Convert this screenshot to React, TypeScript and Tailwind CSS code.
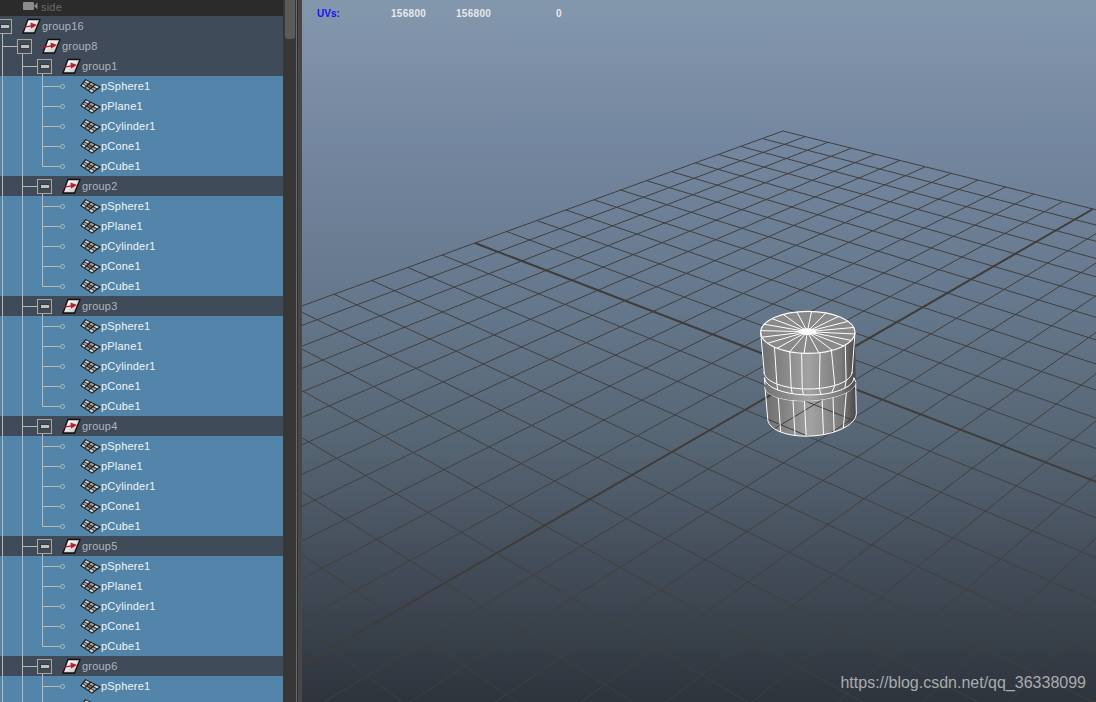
import React from "react";

type P = [number, number];

// Floor grid: homography from (s,t) in [0,2]^2 fitted to four visible grid points
const B: P = [783, 131], M1: P = [475, 243], C: P = [810.5, 372], M2: P = [1093, 209];
const dx1: P = [M1[0] - C[0], M1[1] - C[1]];
const dx2: P = [M2[0] - C[0], M2[1] - C[1]];
const sum: P = [B[0] - M1[0] + C[0] - M2[0], B[1] - M1[1] + C[1] - M2[1]];
const det = dx1[0] * dx2[1] - dx1[1] * dx2[0];
const g = (sum[0] * dx2[1] - sum[1] * dx2[0]) / det;
const h = (dx1[0] * sum[1] - dx1[1] * sum[0]) / det;
const H = (s: number, t: number): P => {
  const w = g * s + h * t + 1;
  const a = M1[0] - B[0] + g * M1[0], b = M2[0] - B[0] + h * M2[0];
  const d = M1[1] - B[1] + g * M1[1], e = M2[1] - B[1] + h * M2[1];
  return [(a * s + b * t + B[0]) / w, (d * s + e * t + B[1]) / w];
};

function Grid() {
  const lines: React.ReactElement[] = [];
  for (let i = 0; i <= 24; i++) {
    const q = i / 12;
    const thick = i === 12;
    const a1 = H(q, 0), a2 = H(q, 2), b1 = H(0, q), b2 = H(2, q);
    for (const [k, p1, p2] of [["a", a1, a2], ["b", b1, b2]] as [string, P, P][]) {
      lines.push(
        <line key={k + i} x1={p1[0]} y1={p1[1]} x2={p2[0]} y2={p2[1]} stroke={thick ? "#403c3a" : "#423f3e"} strokeWidth={thick ? 2 : 1} />
      );
    }
  }
  return <g>{lines}</g>;
}

// Cylinder coordinates are given in a 3x crop anchored at (730,290)
const z = (x: number, y: number): string => `${730 + x / 3},${290 + y / 3}`;
const poly = (pts: number[][]) => pts.map((p) => z(p[0], p[1])).join(" ");

// front half of an ellipse, sampled left to right
const arc = (cx: number, cy: number, rx: number, ry: number, tilt = 0): number[][] => {
  const out: number[][] = [];
  for (let i = 0; i <= 24; i++) {
    const a = Math.PI - (i / 24) * Math.PI;
    const x = cx + rx * Math.cos(a);
    out.push([x, cy + ry * Math.sin(a) + tilt * Math.cos(a)]);
  }
  return out;
};
const onArc = (pts: number[][], x: number): number[] => {
  let best = pts[0];
  for (const p of pts) if (Math.abs(p[0] - x) < Math.abs(best[0] - x)) best = p;
  return best;
};

const topFront = arc(233.5, 127, 141.5, 63);
const band1 = arc(234, 246, 132, 51);
const band2 = arc(238, 263, 134, 52);
const band3 = arc(241, 284, 136, 48, -7);
const bottom = arc(246, 378, 133, 60, -8);

function Wire({ pts, w = 1 }: { pts: number[][]; w?: number }) {
  return <polyline points={poly(pts)} fill="none" stroke="#ffffff" strokeWidth={w} strokeLinejoin="round" />;
}

function CylinderLower() {
  return <polygon points={poly([...band3, ...[...bottom].reverse()])} fill="url(#cyl)" />;
}

function CylinderLowerWire() {
  const xs: [number, number][] = [[145, 150], [183, 188], [225, 228], [272, 272], [312, 312], [350, 345]];
  return (
    <g>
      <Wire pts={band3} />
      <Wire pts={bottom} />
      <Wire pts={[band3[0], bottom[0]]} />
      <Wire pts={[band3[24], bottom[24]]} />
      {xs.map(([a, b]) => (
        <Wire key={a} pts={[onArc(band3, a), onArc(bottom, b)]} />
      ))}
    </g>
  );
}

function CylinderUpper() {
  const spokes: React.ReactElement[] = [];
  const cx = 232, cy = 125, rx = 141.5, ry = 63;
  for (let i = 0; i < 20; i++) {
    const a = (i / 20) * Math.PI * 2 + 0.08;
    spokes.push(<Wire key={i} pts={[[cx, cy], [233.5 + rx * Math.cos(a), 127 + ry * Math.sin(a)]]} />);
  }
  const xs: [number, number][] = [[133, 140], [172, 178], [218, 222], [265, 265], [310, 310], [350, 345]];
  return (
    <g>
      <polygon points={poly([[92, 127], ...[band3[0]], ...band3, [375, 127]])} fill="url(#cyl)" />
      <ellipse cx={730 + 233.5 / 3} cy={290 + 127 / 3} rx={rx / 3} ry={ry / 3} fill="#8a8a8a" stroke="#ffffff" strokeWidth={1.1} />
      {spokes}
      <ellipse cx={730 + cx / 3} cy={290 + cy / 3} rx={9} ry={3.4} fill="#ffffff" />
      <Wire pts={[[92, 127], [103, 250]]} />
      <Wire pts={[[375, 127], [366, 250]]} />
      <Wire pts={[[103, 263], [105, 284]]} />
      <Wire pts={[[372, 263], [377, 276]]} />
      {xs.map(([a, b]) => (
        <Wire key={a} pts={[onArc(topFront, a), onArc(band1, b)]} />
      ))}
      {xs.map(([a, b]) => (
        <Wire key={`s${a}`} pts={[onArc(band1, b), onArc(band2, b + 1)]} />
      ))}
      <Wire pts={band1} />
      <Wire pts={band2} />
    </g>
  );
}

function Viewport() {
  return (
    <svg className="absolute inset-0 h-full w-full" viewBox="302 0 794 702">
      <defs>
        <linearGradient id="cyl" x1="0" y1="0" x2="1" y2="0">
          <stop offset="0" stopColor="#6e6e6e" />
          <stop offset="0.5" stopColor="#a2a2a2" />
          <stop offset="0.85" stopColor="#7a7a7a" />
          <stop offset="1" stopColor="#474747" />
        </linearGradient>
      </defs>
      <CylinderLower />
      <Grid />
      <CylinderLowerWire />
      <CylinderUpper />
    </svg>
  );
}

const LINE = "#b7b9b2";

function Box({ x }: { x: number }) {
  return (
    <g shapeRendering="crispEdges">
      <rect x={x + 0.5} y={3.5} width={14} height={14} fill="#3f4a55" stroke="#a8a89f" />
      <rect x={x + 3} y={8} width={9} height={5} fill="#343a40" />
      <rect x={x + 3.5} y={9} width={8} height={2.5} fill="#bfbfbf" />
    </g>
  );
}

function Guides({ xs }: { xs: number[] }) {
  return (
    <g shapeRendering="crispEdges">
      {xs.map((x) => (
        <rect key={x} x={x} y={0} width={1} height={20} fill={LINE} />
      ))}
    </g>
  );
}

function GroupConnector({ depth }: { depth: number }) {
  // depth 0: group16, depth 1: group8, depth 2: groupN
  const boxX = depth * 20 - 3;
  const width = 22 + depth * 20;
  const parents = [2, 22].slice(0, depth);
  return (
    <svg width={width} height={20} className="shrink-0">
      <Guides xs={parents} />
      {depth > 0 && <rect x={(depth - 1) * 20 + 2} y={10} width={16} height={1} fill={LINE} shapeRendering="crispEdges" />}
      <rect x={depth * 20 + 2} y={17} width={1} height={3} fill={LINE} shapeRendering="crispEdges" />
      <Box x={boxX} />
    </svg>
  );
}

function ChildConnector({ last }: { last: boolean }) {
  return (
    <svg width={80} height={20} className="shrink-0">
      <Guides xs={[2, 22]} />
      <rect x={42} y={0} width={1} height={last ? 11 : 20} fill={LINE} shapeRendering="crispEdges" />
      <rect x={42} y={10} width={18} height={1} fill={LINE} shapeRendering="crispEdges" />
      <circle cx={62.5} cy={10.5} r={2} fill="none" stroke={LINE} />
    </svg>
  );
}

function GroupIcon() {
  return (
    <svg width={20} height={20} viewBox="0 0 20 20" className="shrink-0" style={{ overflow: "visible" }}>
      <defs>
        <linearGradient id="gi" x1="0" y1="0" x2="1" y2="1">
          <stop offset="0.2" stopColor="#ffffff" />
          <stop offset="1" stopColor="#b4b4b4" />
        </linearGradient>
      </defs>
      <polygon points="6,3.5 18,3.5 12.5,17 1,17" fill="url(#gi)" stroke="#0e0e0e" strokeWidth={1.3} />
      <line x1={0} y1={11.3} x2={10} y2={9.8} stroke="#a51f2a" strokeWidth={1.3} />
      <polygon points="8.5,6.6 15,9 9,12.6" fill="#b71d2a" />
    </svg>
  );
}

function MeshIcon() {
  const A: P = [5.5, 0.7], Bb: P = [20, 8], Cc: P = [12, 14], D: P = [1, 6.5];
  const at = (u: number, v: number): P => [
    (1 - u) * (1 - v) * A[0] + u * (1 - v) * Bb[0] + u * v * Cc[0] + (1 - u) * v * D[0],
    (1 - u) * (1 - v) * A[1] + u * (1 - v) * Bb[1] + u * v * Cc[1] + (1 - u) * v * D[1],
  ];
  const cells: React.ReactElement[] = [];
  for (let i = 0; i < 3; i++) {
    for (let j = 0; j < 3; j++) {
      const m = 0.045;
      const pts = [at(i / 3 + m, j / 3 + m), at((i + 1) / 3 - m, j / 3 + m), at((i + 1) / 3 - m, (j + 1) / 3 - m), at(i / 3 + m, (j + 1) / 3 - m)];
      const fill = i === 1 && j === 1 ? "#6e6e6e" : (i + j) % 2 === 0 ? "#d4d4d4" : "#a4a4a4";
      cells.push(<polygon key={`${i}${j}`} points={pts.map((p) => p.join(",")).join(" ")} fill={fill} />);
    }
  }
  return (
    <svg width={21} height={15} viewBox="0 0 21 15" className="shrink-0">
      <polygon points={`${A.join(",")} ${Bb.join(",")} ${Cc.join(",")} ${D.join(",")}`} fill="#1c1c1c" stroke="#1c1c1c" strokeWidth={1.2} />
      {cells}
    </svg>
  );
}

function GroupRow({ name, depth }: { name: string; depth: number }) {
  return (
    <div className="flex h-5 items-center bg-[#3f4b59]">
      <GroupConnector depth={depth} />
      <GroupIcon />
      <span className="text-[11px] leading-5 tracking-[0.2px] text-[#aeb4ba]">{name}</span>
    </div>
  );
}

function MeshRow({ name, last }: { name?: string; last: boolean }) {
  return (
    <div className="flex h-5 items-center bg-[#5285a9]">
      <ChildConnector last={last} />
      <MeshIcon />
      {name && <span className="text-[11px] leading-5 tracking-[0.2px] text-[#f0f4f7]">{name}</span>}
    </div>
  );
}

const meshes = ["pSphere1", "pPlane1", "pCylinder1", "pCone1", "pCube1"];

function Outliner() {
  return (
    <div className="h-full w-[283px] shrink-0 overflow-hidden font-['Liberation_Sans',sans-serif]">
      <div className="flex h-4 items-center bg-[#2b2b2b] pl-[22px]">
        <svg width={19} height={16} viewBox="0 0 19 16" className="shrink-0 -translate-y-px">
          <rect x={1} y={3} width={11} height={8} rx={1} fill="#8c8c8c" />
          <polygon points="12,7 15.5,3.5 15.5,10.5" fill="#8c8c8c" />
        </svg>
        <span className="-translate-y-px text-[11px] tracking-[0.2px] text-[#6a6a6a]">side</span>
      </div>
      <GroupRow name="group16" depth={0} />
      <GroupRow name="group8" depth={1} />
      {["group1", "group2", "group3", "group4", "group5"].map((g) => (
        <React.Fragment key={g}>
          <GroupRow name={g} depth={2} />
          {meshes.map((m, i) => (
            <MeshRow key={m} name={m} last={i === meshes.length - 1} />
          ))}
        </React.Fragment>
      ))}
      <GroupRow name="group6" depth={2} />
      <MeshRow name="pSphere1" last={false} />
      <MeshRow last={false} />
    </div>
  );
}

function Scrollbar() {
  return (
    <div className="flex h-full shrink-0">
      <div className="h-full w-[13px] bg-[#373737] pl-0.5">
        <div className="h-[39px] w-2.5 rounded-b-[3px] bg-[#5b5b5b]" />
      </div>
      <div className="h-full w-px bg-[#6a6a6a]" />
      <div className="h-full w-px bg-[#2e2e2e]" />
      <div className="h-full w-[4px] bg-[#474747]" />
    </div>
  );
}

export default function App() {
  return (
    <div className="flex h-[702px] w-[1096px] overflow-hidden bg-[#373737]">
      <Outliner />
      <Scrollbar />
      <div className="relative h-full flex-1 overflow-hidden bg-[linear-gradient(to_bottom,#8397ad_0%,#7487a0_20%,#64768a_45%,#566573_63%,#434d59_80%,#2e343c_100%)] font-['Liberation_Sans',sans-serif]">
        <Viewport />
        <div className="absolute left-[15px] top-[8px] flex h-3 items-center text-[10px] font-bold leading-3">
          <span className="w-[74px] text-[#1414f0]">UVs:</span>
          <span className="w-[65px] tracking-[0.3px] text-[#e6e8ea]">156800</span>
          <span className="w-[100px] tracking-[0.3px] text-[#e6e8ea]">156800</span>
          <span className="text-[#e6e8ea]">0</span>
        </div>
        <div className="absolute bottom-[9px] right-[10px] text-base leading-5 text-[#a9acb0]">https://blog.csdn.net/qq_36338099</div>
      </div>
    </div>
  );
}
